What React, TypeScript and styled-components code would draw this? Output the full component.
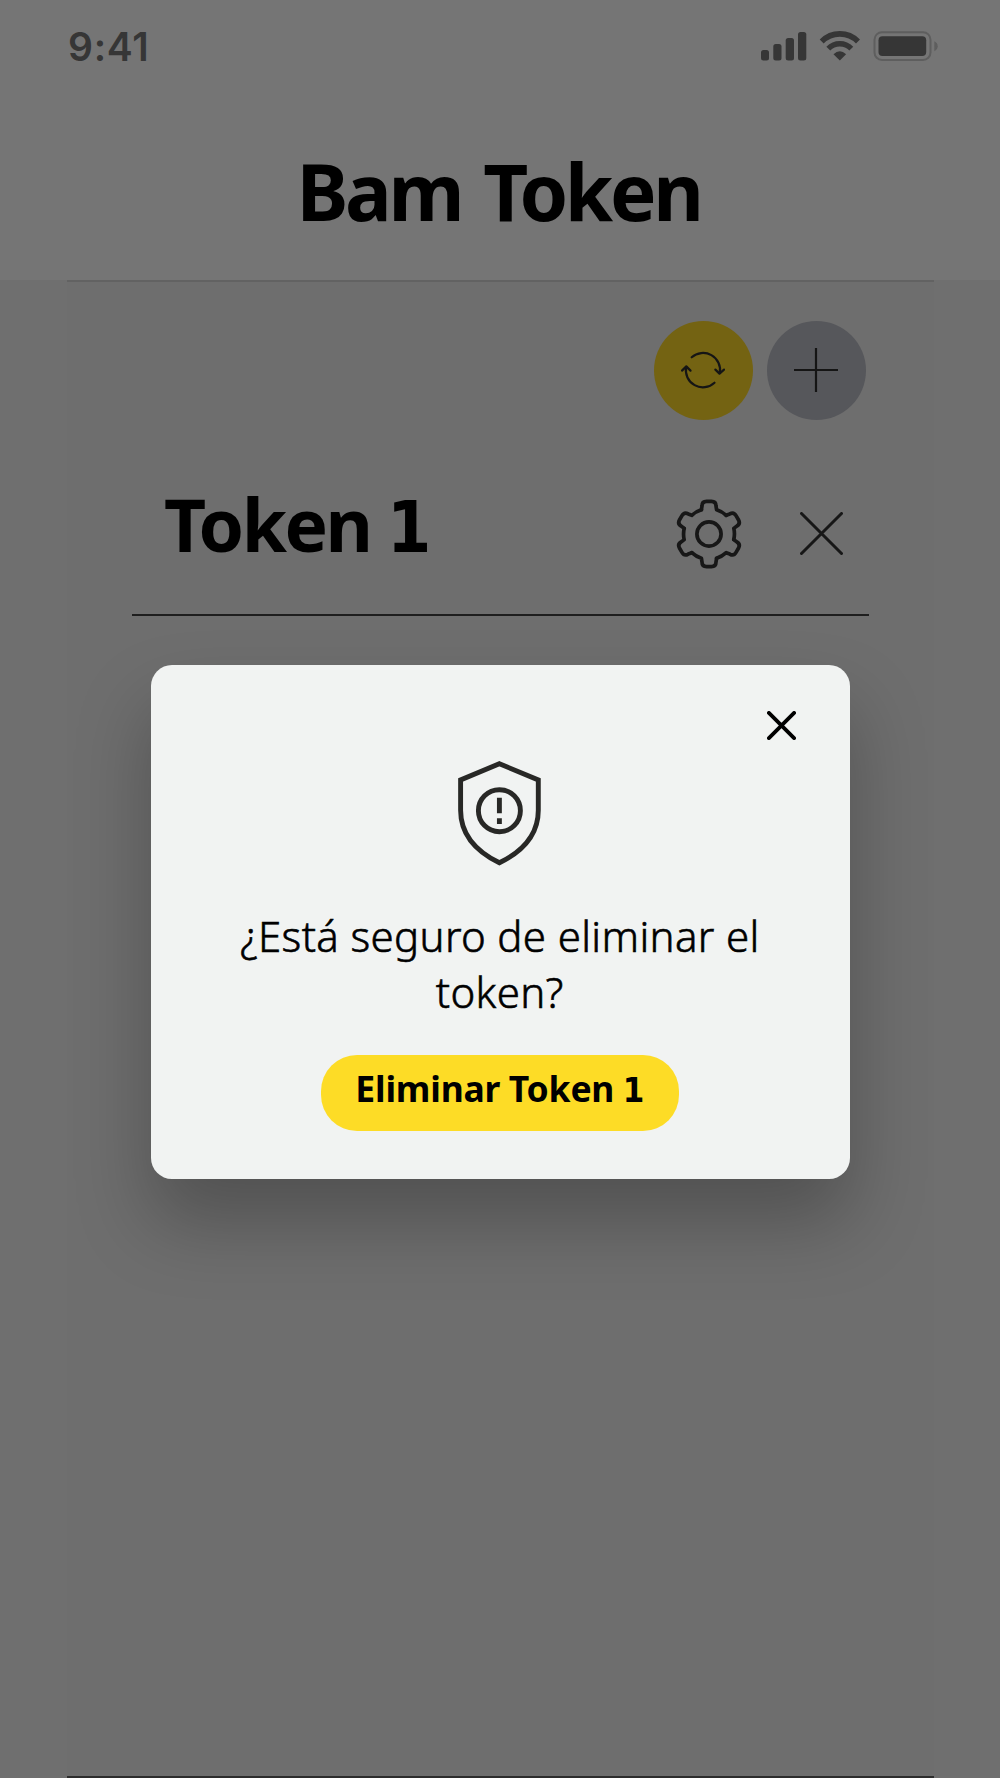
import React from "react";
import styled, { createGlobalStyle } from "styled-components";

const GlobalStyle = createGlobalStyle`
  *, *::before, *::after { box-sizing: border-box; }
  body { margin: 0; background: #6f6f6f; }
  button { border: 0; padding: 0; background: none; font: inherit; color: inherit; }
  svg { display: block; flex: none; }
`;

const Screen = styled.main`
  position: relative;
  width: 1000px;
  height: 1778px;
  display: flex;
  flex-direction: column;
  overflow: hidden;
  background: #6f6f6f;
  color: #000;
  font-family: "Noto Sans", "Open Sans", sans-serif;
`;

const Header = styled.header`
  height: 279.5px;
  flex: none;
  background: #757575;
`;

const StatusBar = styled.div`
  height: 83px;
  padding: 7px 62px 0 68px;
  display: flex;
  justify-content: space-between;
  color: #363636;
`;

const Clock = styled.time`
  font: 600 39px/80px Inter, sans-serif;
  letter-spacing: 0.7px;
`;

const Title = styled.h1`
  margin: 0;
  padding-top: 55px;
  padding-right: 3px;
  text-align: center;
  font-size: 78px;
  line-height: 106px;
  font-weight: 700;
  letter-spacing: -3.3px;
  word-spacing: 5px;
`;

const Content = styled.section`
  flex: 1;
  width: 867px;
  margin-left: 67px;
  padding: 39px 65px 0;
  border-top: 2px solid #626262;
  border-bottom: 2px solid #2c2c2c;
  background: #6e6e6e;
`;

const Actions = styled.div`
  display: flex;
  justify-content: flex-end;
  gap: 13.5px;
  padding-right: 3px;
`;

const RoundButton = styled.button<{ $tone: string }>`
  width: 99.5px;
  height: 99.5px;
  border-radius: 50%;
  display: grid;
  place-items: center;
  background: ${(p) => p.$tone};
`;

const TokenRow = styled.div`
  height: 196px;
  padding: 54px 26px 0 32px;
  display: flex;
  justify-content: space-between;
  border-bottom: 2.5px solid #1e1e1e;
`;

const TokenName = styled.h2`
  margin: 0;
  font-size: 73px;
  line-height: 100px;
  font-weight: 700;
  letter-spacing: -2.5px;
`;

const Numeral = styled.span`
  font-family: "DejaVu Sans Condensed", "DejaVu Sans", sans-serif;
  font-stretch: condensed;
  font-size: 0.97em;
`;

const TokenTools = styled.div`
  display: flex;
  align-items: center;
  gap: 58px;
  height: 119px;
`;

const Overlay = styled.div`
  position: absolute;
  inset: 0;
  padding-top: 665px;
  padding-left: 0.5px;
  display: flex;
  align-items: flex-start;
  justify-content: center;
`;

const Dialog = styled.div`
  width: 698.5px;
  height: 514px;
  padding: 46px 54px 0 53px;
  display: flex;
  flex-direction: column;
  align-items: center;
  border-radius: 21px;
  background: #f1f3f2;
  box-shadow: 0 43px 74px rgba(0, 0, 0, 0.26);
`;

const CloseButton = styled.button`
  align-self: flex-end;
  height: 28px;
`;

const Shield = styled.div`
  margin-top: 21.5px;
  padding-left: 1px;
  height: 104.5px;
`;

const Question = styled.p`
  width: 570px;
  margin: 43px 0 0;
  text-align: center;
  font-size: 42px;
  line-height: 56px;
  font-weight: 300;
  letter-spacing: 0.35px;
  -webkit-text-stroke: 0.6px #000;
`;

const DeleteButton = styled.button`
  width: 358px;
  height: 76px;
  margin-top: 35px;
  padding-bottom: 8px;
  border-radius: 36px;
  background: #fddc26;
  font-size: 35.5px;
  line-height: 50px;
  font-weight: 700;
  letter-spacing: -0.2px;
  word-spacing: -0.5px;
  white-space: nowrap;
`;

const StatusIcons = () => (
  <svg width="178" height="60" viewBox="760 7 178 60" fill="#363636">
    <rect x="761" y="50" width="8" height="10.5" rx="2.5" />
    <rect x="773.3" y="44" width="8.2" height="16.5" rx="2.5" />
    <rect x="785.7" y="38" width="8.3" height="22.5" rx="2.5" />
    <rect x="798" y="32" width="8.3" height="28.5" rx="2.5" />
    <g fill="none" stroke="#363636">
      <path d="M821.7 41.5 A25.5 25.5 0 0 1 858 41.5" strokeWidth="5.6" />
      <path d="M828.3 48.7 A16 16 0 0 1 851.3 48.7" strokeWidth="5.4" />
    </g>
    <path d="M833.5 54.3 Q839.8 48.3 846.1 54.3 L839.8 60.5 Z" />
    <rect x="874.5" y="32.2" width="56" height="27.8" rx="7.5" fill="none" stroke="#5e5e5e" strokeWidth="2" />
    <rect x="878.5" y="36.3" width="47.7" height="19.7" rx="4" />
    <path d="M934.3 41.3 Q937.7 43 937.7 46.2 Q937.7 49.4 934.3 51.2 Z" fill="#5e5e5e" />
  </svg>
);

const RefreshIcon = () => (
  <svg width="44" height="38" viewBox="-22 -19 44 38" fill="none" stroke="#151515" strokeWidth="2.2" strokeLinecap="round" strokeLinejoin="round">
    <path d="M-11.3 -12.7 A17 17 0 0 1 16.8 3" />
    <path d="M12.4 -0.4 L16.5 3.6 L21 -0.4" />
    <path d="M11.5 12.7 A17 17 0 0 1 -16.8 -3" />
    <path d="M-21 0.6 L-16.7 -3.6 L-12.5 0.6" />
  </svg>
);

const PlusIcon = () => (
  <svg width="44" height="44" viewBox="-22 -22 44 44" stroke="#151515" strokeWidth="2.2">
    <path d="M-22 0 H22 M0 -22 V22" />
  </svg>
);

const tooth = "M-7.6 -24.3 L-7 -28 Q-7 -32.6 -2.4 -32.6 H2.4 Q7 -32.6 7 -28 L7.6 -24.3 Q13 -22.6 17.2 -18.7";

const GearIcon = () => (
  <svg width="66" height="70" viewBox="-33 -35 66 70" fill="none" stroke="#171717" strokeWidth="3.7" strokeLinejoin="round" strokeLinecap="round">
    {[0, 60, 120, 180, 240, 300].map((angle) => (
      <path key={angle} d={tooth} transform={`rotate(${angle})`} />
    ))}
    <circle r="12.1" />
  </svg>
);

const CrossIcon = ({ size, weight, color }: { size: number; weight: number; color: string }) => {
  const e = size / 2 - weight / 2;
  return (
    <svg width={size} height={size} viewBox={`${-size / 2} ${-size / 2} ${size} ${size}`} stroke={color} strokeWidth={weight} strokeLinecap="round">
      <path d={`M${-e} ${-e} L${e} ${e} M${e} ${-e} L${-e} ${e}`} />
    </svg>
  );
};

const ShieldIcon = () => (
  <svg width="84" height="105" viewBox="458.9 760.8 84 105" fill="none" stroke="#282826" strokeWidth="4.9">
    <path d="M500.3 763.5 L539.2 779.8 V810 C539.2 833 526 850 500.3 862.6 C474.6 850 461.5 833 461.5 810 V779.8 Z" />
    <circle cx="500.3" cy="810.5" r="21" />
    <path d="M500.3 797.5 V813 M500.3 818 V823.7" />
  </svg>
);

export default function App() {
  return (
    <Screen>
      <GlobalStyle />
      <Header>
        <StatusBar>
          <Clock>9:41</Clock>
          <StatusIcons />
        </StatusBar>
        <Title>Bam Token</Title>
      </Header>
      <Content>
        <Actions>
          <RoundButton $tone="#746312" aria-label="Actualizar"><RefreshIcon /></RoundButton>
          <RoundButton $tone="#56575b" aria-label="Agregar"><PlusIcon /></RoundButton>
        </Actions>
        <TokenRow>
          <TokenName>Token <Numeral>1</Numeral></TokenName>
          <TokenTools>
            <GearIcon />
            <CrossIcon size={43} weight={3} color="#171717" />
          </TokenTools>
        </TokenRow>
      </Content>
      <Overlay>
        <Dialog role="dialog">
          <CloseButton aria-label="Cerrar"><CrossIcon size={29} weight={3.8} color="#000" /></CloseButton>
          <Shield><ShieldIcon /></Shield>
          <Question>¿Está seguro de eliminar el token?</Question>
          <DeleteButton>Eliminar Token <Numeral>1</Numeral></DeleteButton>
        </Dialog>
      </Overlay>
    </Screen>
  );
}
